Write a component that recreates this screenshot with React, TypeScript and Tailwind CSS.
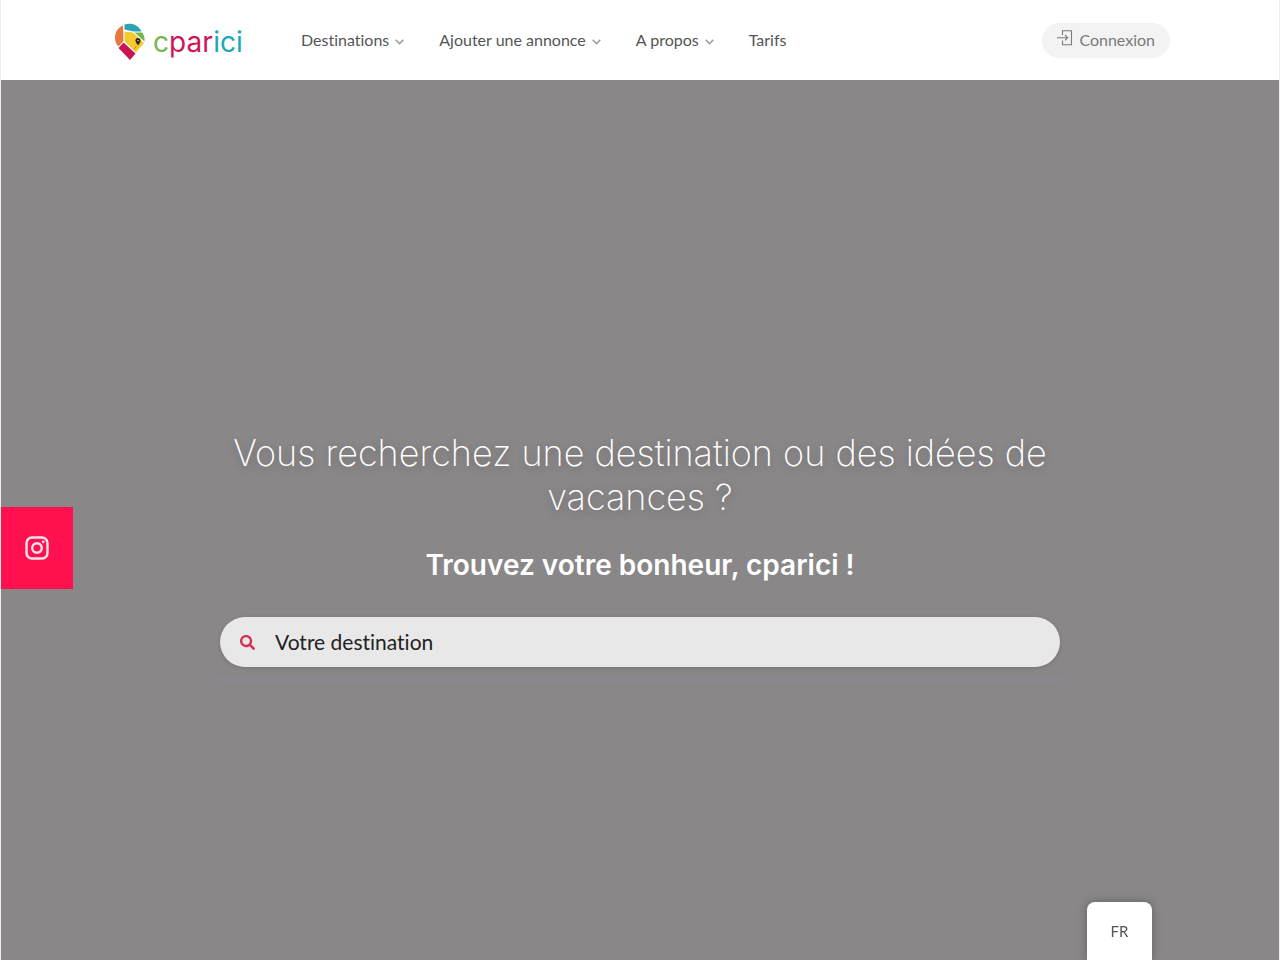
import { FaSearch } from "react-icons/fa";

const links = [
  { label: "Destinations", menu: true },
  { label: "Ajouter une annonce", menu: true },
  { label: "A propos", menu: true },
  { label: "Tarifs", menu: false },
];

function Logo() {
  return (
    <a href="#" aria-label="cparici" className="flex items-center gap-[7px] pt-1">
      <svg className="w-8 h-10" viewBox="0 0 32 40" fill="none">
        <path d="M9 3.500C3 6 .5 12 1 17c.4 3 1.500 5.500 3.500 7.500L9.500 19Z" fill="#e6793f" />
        <path d="M10.500 2.500C18 .5 24 3 27.500 9.500H19.500L10.500 7.500Z" fill="#2aa3b3" />
        <path d="M20.500 10.500h8c1.500 3 2.500 5.500 2 9Z" fill="#73b84c" />
        <path d="M10.500 9.500l8.500 1 11 10.500-8 9.500L10.500 19.500Z" fill="#f5ca2e" />
        <path d="M9.500 20.500L21.500 31.500 16 38 4.500 26Z" fill="#cc1450" />
        <path d="M24 16a2.500 2.500 0 0 0-2.500 2.500c0 1.500 1 3 2.500 5 1.500-2 2.500-3.500 2.500-5A2.500 2.500 0 0 0 24 16Z" fill="#28231f" />
        <circle cx="24" cy="18.500" r=".8" fill="#f5ca2e" />
        <path d="M20 27l1.500-1 .5-2" stroke="#a88516" strokeWidth=".8" />
      </svg>
      <span className="font-['Inter',sans-serif] text-[28px] leading-8">
        <span className="text-[#76b84d]">c</span>
        <span className="text-[#cf1458]">par</span>
        <span className="text-[#20a7b6]">ici</span>
      </span>
    </a>
  );
}

function Chevron() {
  return (
    <svg className="w-[9px] h-2 mt-1" viewBox="0 0 9 8" fill="none" stroke="#999" strokeWidth="1.6">
      <path d="M.7 1.800l3.800 3.900 3.800-3.900" />
    </svg>
  );
}

function LoginIcon() {
  return (
    <svg className="w-4 h-4 mb-1" viewBox="0 0 16 16" fill="none" stroke="currentColor" strokeWidth="1.1">
      <path d="M5.500 5V.700h9v14.100h-9v-4.300M0 7.700h10.500M8 5l2.700 2.700L8 10.400" />
    </svg>
  );
}

function Header() {
  return (
    <header className="h-20 bg-white">
      <div className="max-w-[1060px] h-full mx-auto flex items-center">
        <div className="w-[191px] pl-1">
          <Logo />
        </div>
        <nav className="flex items-center gap-[35px] text-[16px] leading-6 text-[#555]">
          {links.map((link) => (
            <a key={link.label} href="#" className="flex items-center gap-[6px] whitespace-nowrap">
              {link.label}
              {link.menu && <Chevron />}
            </a>
          ))}
        </nav>
        <a
          href="#"
          className="ml-auto flex items-center gap-[6px] h-[35px] px-[15px] rounded-full bg-[#f3f3f3] text-[16px] leading-6 text-[#7a7a7a]"
        >
          <LoginIcon />
          Connexion
        </a>
      </div>
    </header>
  );
}

function Hero() {
  return (
    <main className="flex-1 flex flex-col items-center justify-center pt-[68px] px-4 text-center text-white">
      <h1 className="max-w-[860px] font-['Inter',sans-serif] font-extralight text-[36px] leading-[44px] [text-shadow:0_2px_8px_rgba(0,0,0,0.25)]">
        Vous recherchez une destination ou des idées de vacances ?
      </h1>
      <h2 className="mt-7 font-['Inter',sans-serif] font-semibold text-[28px] leading-9">
        Trouvez votre bonheur, cparici !
      </h2>
      <form className="mt-6 w-full max-w-[860px] p-[10px] rounded-xl shadow-[0_3px_8px_rgba(135,145,170,0.4)]">
        <label className="flex items-center gap-5 h-[50px] px-5 rounded-full bg-[#e8e8e8] shadow-[0_1px_4px_rgba(0,0,0,0.15)]">
          <FaSearch className="text-[15px] text-[#d52f55]" aria-hidden />
          <input
            type="text"
            aria-label="Votre destination"
            placeholder="Votre destination"
            className="flex-1 min-w-0 bg-transparent outline-none text-[21px] leading-7 text-[#222] placeholder:text-[#222]"
          />
        </label>
      </form>
    </main>
  );
}

export default function App() {
  return (
    <div className="bg-[#eee] px-px font-['Lato',sans-serif] [font-variant-ligatures:none]">
      <div className="min-h-screen flex flex-col bg-[#8a8788]">
        <Header />
        <Hero />
      </div>
      <a
        href="#"
        aria-label="Instagram"
        className="fixed left-px top-[507px] w-[72px] h-[82px] flex items-center justify-center bg-[#ff1150] text-[#ffe4ec]"
      >
        <svg className="w-6 h-6" viewBox="0 0 24 24" fill="none" stroke="currentColor" strokeWidth="2.400">
          <rect x="1.500" y="1.500" width="21" height="21" rx="5.500" />
          <circle cx="12" cy="12" r="4.800" />
          <circle cx="18.200" cy="5.800" r="1.400" fill="currentColor" stroke="none" />
        </svg>
      </a>
      <button
        type="button"
        className="fixed right-32 bottom-0 w-[65px] h-[58px] rounded-t-lg bg-white text-[15px] leading-5 text-[#555] shadow-[0_0_10px_rgba(0,0,0,0.3)]"
      >
        FR
      </button>
    </div>
  );
}
